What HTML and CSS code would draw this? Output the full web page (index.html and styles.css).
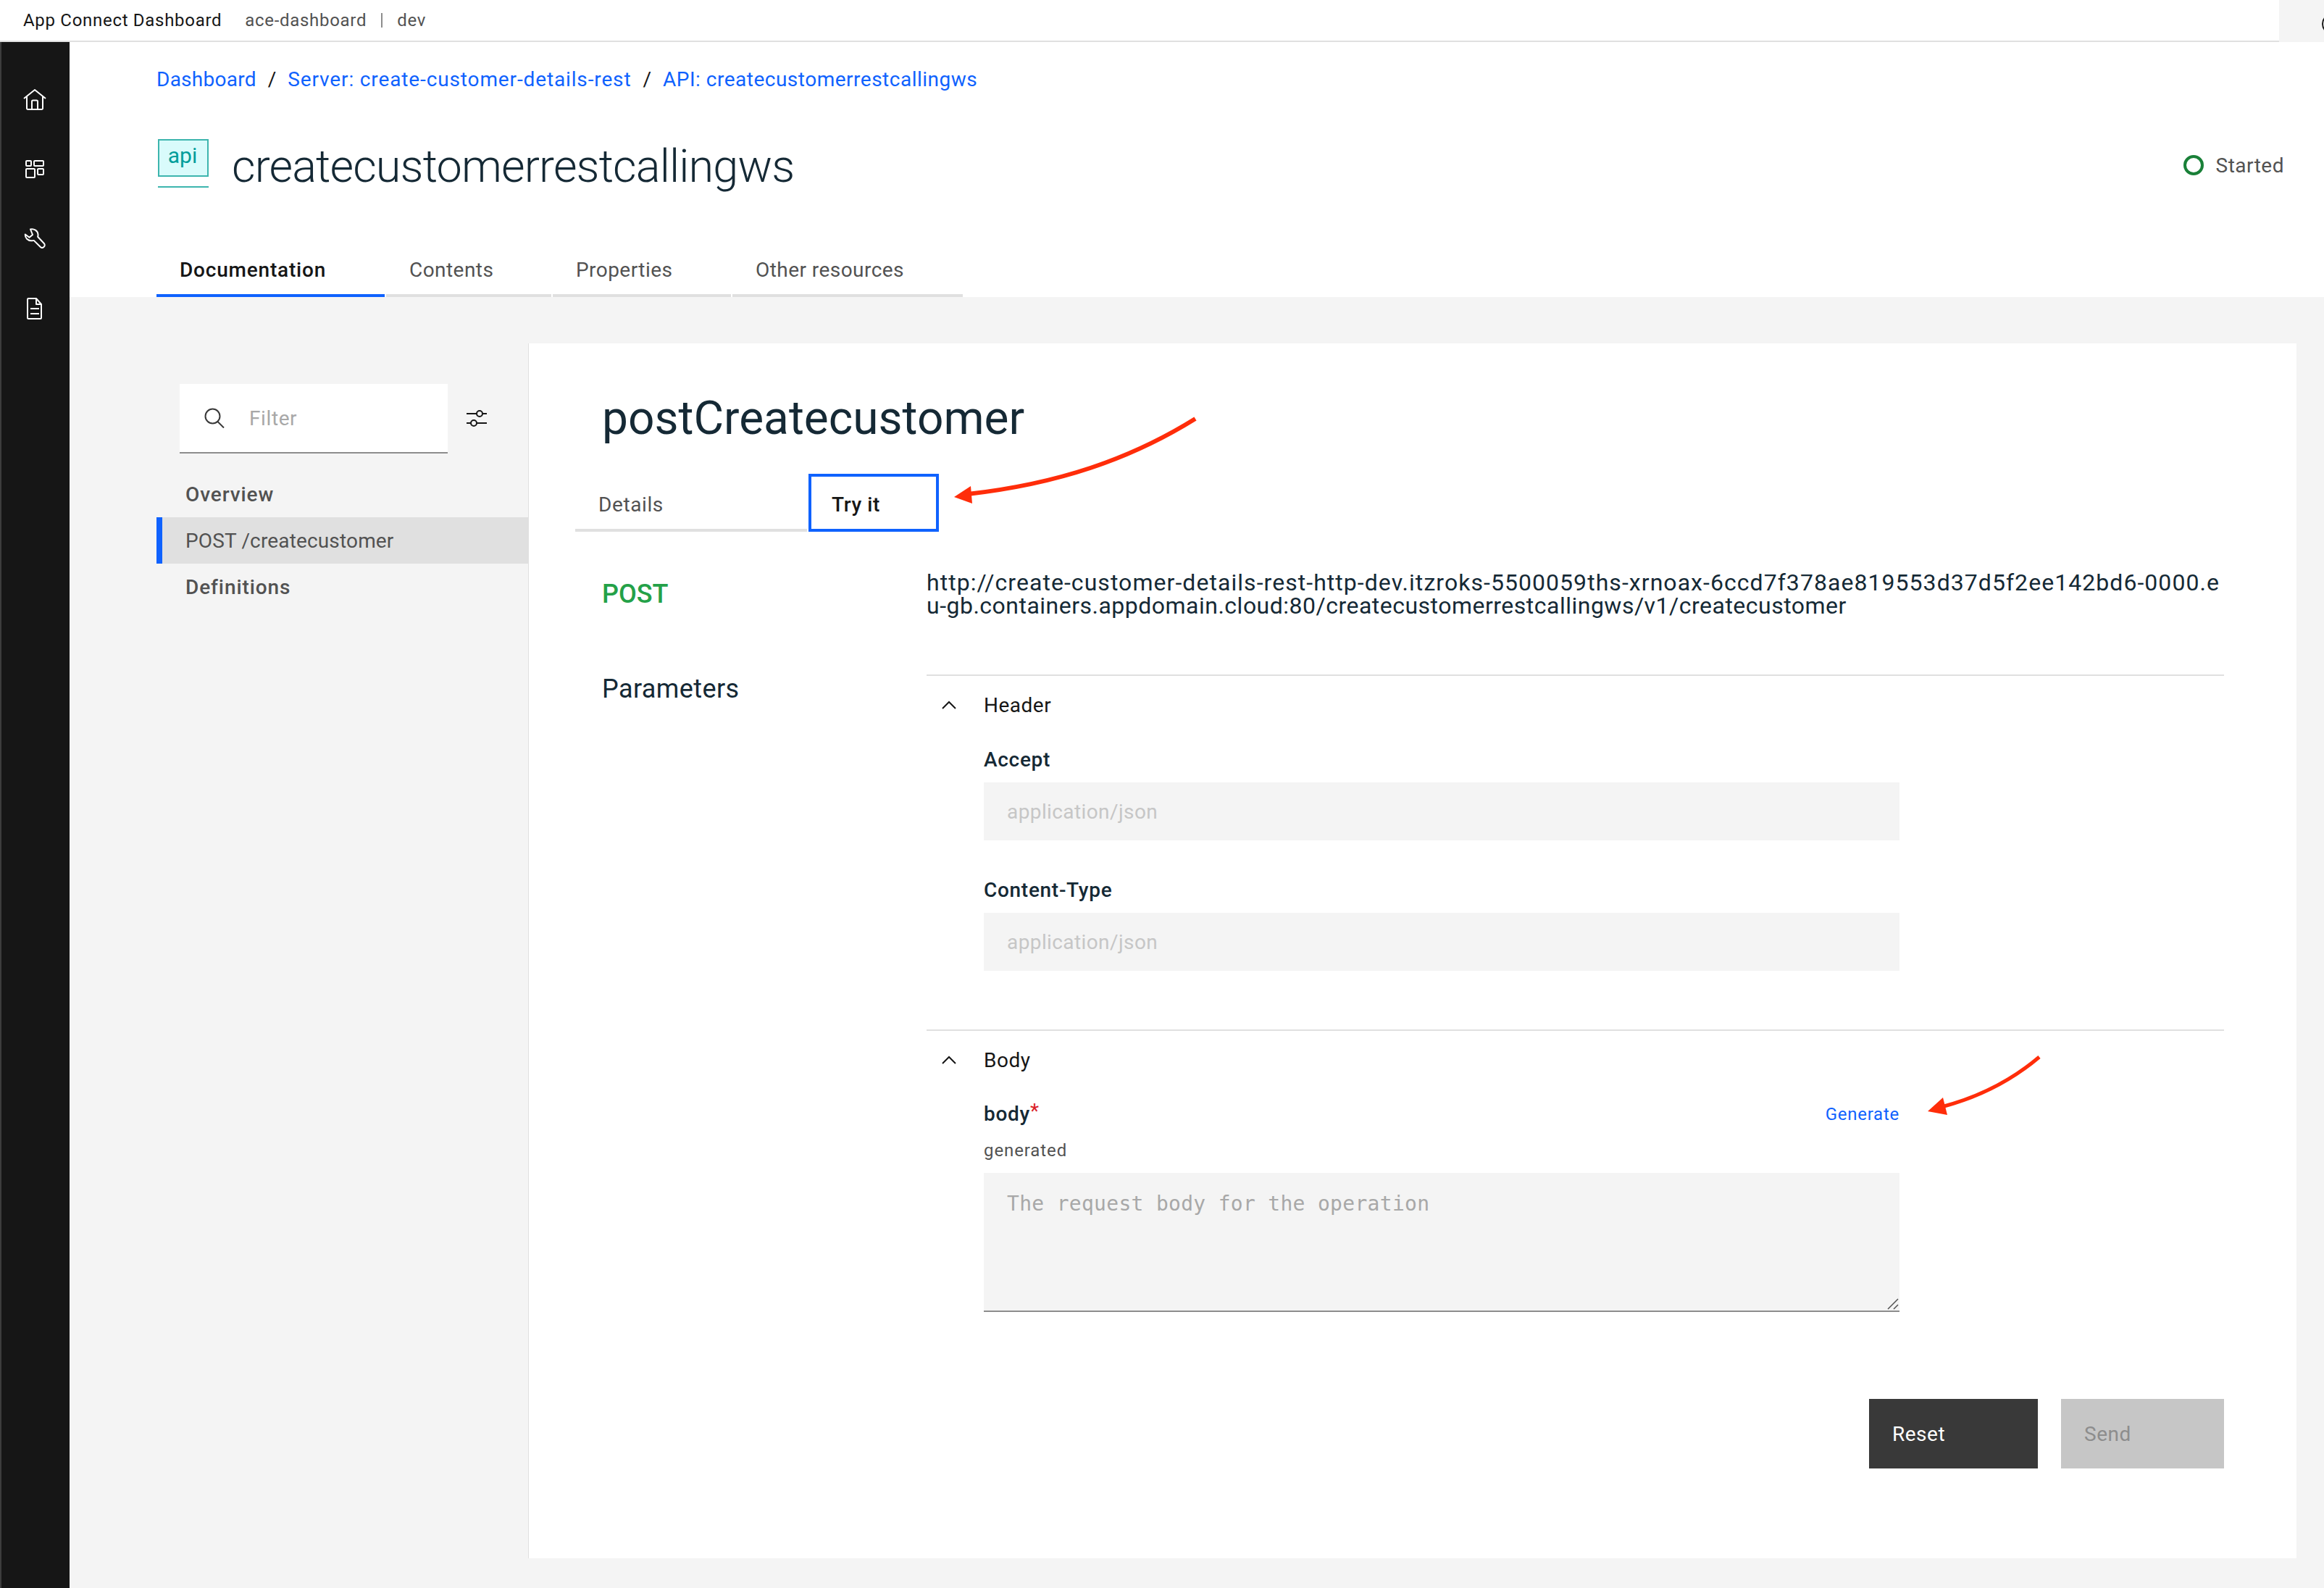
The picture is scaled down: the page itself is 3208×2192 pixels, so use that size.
FILE: index.html
```html
<!DOCTYPE html>
<html lang="en">
<head>
    <meta charset="UTF-8">
    <title>App Connect Dashboard</title>
    <link rel="stylesheet" href="styles.css">
</head>
<body>

<header class="topbar">
    <span class="product">App Connect Dashboard</span>
    <span class="instance">ace-dashboard</span>
    <span class="instance-sep"></span>
    <span class="instance">dev</span>
    <div class="topbar-user">
        <svg width="32" height="32" viewBox="0 0 32 32"><circle cx="16" cy="16" r="13" fill="none" stroke="#161616" stroke-width="2"/></svg>
    </div>
</header>

<div class="layout">
    <nav class="sidebar">
        <div class="side-item">
            <svg width="32" height="30" viewBox="0 0 32 30" fill="none" stroke="#fff" stroke-width="2" stroke-linejoin="round">
                <path d="M1 13 16 1l15 12"/>
                <path d="M5 10v16.500a1.500 1.500 0 0 0 1.500 1.500h19a1.500 1.500 0 0 0 1.500-1.500V10"/>
                <path d="M12 28V17a1.500 1.500 0 0 1 1.500-1.500h5A1.500 1.500 0 0 1 20 17v11"/>
            </svg>
        </div>
        <div class="side-item">
            <svg width="28" height="26" viewBox="0 0 28 26" fill="none" stroke="#fff" stroke-width="2">
                <rect x="2" y="1" width="7" height="7" rx="1"/>
                <rect x="13" y="1" width="13" height="7" rx="1"/>
                <rect x="2" y="12" width="12" height="12" rx="1"/>
                <rect x="18" y="12" width="8" height="8" rx="1"/>
            </svg>
        </div>
        <div class="side-item">
            <svg width="30" height="30" viewBox="0 0 30 30" fill="none" stroke="#fff" stroke-width="2" stroke-linejoin="round">
                <path d="M9 1.500c5-1.200 10 2 10.500 7 .1 1.200 0 2.300-.4 3.300l8.700 9.200c1.300 1.400 1.200 3.500-.2 4.800s-3.300 1.500-4.700.2l-9.200-9.100c-1.200.4-2.400.5-3.600.3C5.300 17.300 1.500 13.500 1.800 8.500l5.700 4.300 4.500-3.800z"/>
            </svg>
        </div>
        <div class="side-item">
            <svg width="22" height="30" viewBox="0 0 22 30" fill="none" stroke="#fff" stroke-width="2" stroke-linejoin="round">
                <path d="M2 1h11l7 8v18.500a1.500 1.500 0 0 1-1.500 1.500h-16A1.500 1.500 0 0 1 1 27.500V2.500A1.500 1.500 0 0 1 2 1z"/>
                <path d="M13 1v8h7M5 15h12M5 22h12"/>
            </svg>
        </div>
    </nav>

    <main class="main">
        <section class="page-header">
            <div class="breadcrumb">
                <a class="crumb-home">Dashboard</a><span class="crumb-sep">/</span><a class="crumb-server">Server: create-customer-details-rest</a><span class="crumb-sep">/</span><a class="crumb-api">API: createcustomerrestcallingws</a>
            </div>
            <div class="title-row">
                <div class="api-badge">
                    <div class="api-box">api</div>
                    <div class="api-line"></div>
                </div>
                <h1 class="page-title">createcustomerrestcallingws</h1>
                <div class="status">
                    <span class="status-dot"></span>
                    <span>Started</span>
                </div>
            </div>
            <div class="page-tabs">
                <div class="page-tab active">Documentation</div>
                <div class="page-tab">Contents</div>
                <div class="page-tab">Properties</div>
                <div class="page-tab">Other resources</div>
            </div>
        </section>

        <section class="content">
            <aside class="doc-nav">
                <div class="filter-row">
                    <div class="filter">
                        <svg width="28" height="28" viewBox="0 0 28 28" fill="none" stroke="#393939" stroke-width="2"><circle cx="11.500" cy="11.500" r="10"/><path d="M18.500 19 27 27.500"/></svg>
                        <input class="filter-input" type="text" placeholder="Filter">
                    </div>
                    <svg class="filter-opts" width="28" height="24" viewBox="0 0 28 24" fill="none" stroke="#161616" stroke-width="2"><path d="M0 5h14M22 5h6M0 18h6M14 18h14"/><circle cx="18" cy="5" r="4"/><circle cx="10" cy="18" r="4"/></svg>
                </div>
                <div class="nav-item strong">Overview</div>
                <div class="nav-item selected">POST /createcustomer</div>
                <div class="nav-item strong">Definitions</div>
            </aside>

            <article class="card">
                <h2 class="op-title">postCreatecustomer</h2>
                <div class="op-tabs">
                    <div class="op-tab">Details</div>
                    <div class="op-tab current">Try it</div>
                </div>
                <div class="op-grid">
                    <div class="method">POST</div>
                    <div class="url">
                        <span class="url-host">http://create-customer-details-rest-http-dev.itzroks-5500059ths-xrnoax-6ccd7f378ae819553d37d5f2ee142bd6-0000.e</span>
                        <span class="url-path">u-gb.containers.appdomain.cloud:80/createcustomerrestcallingws/v1/createcustomer</span>
                    </div>
                    <div class="params-title">Parameters</div>
                    <div class="params">
                        <div class="accordion">
                            <div class="acc-head">
                                <svg width="20" height="12" viewBox="0 0 20 12" fill="none" stroke="#161616" stroke-width="2"><path d="M1 11 10 2l9 9"/></svg>
                                <span>Header</span>
                            </div>
                            <div class="acc-body">
                                <label class="field-label">Accept</label>
                                <input class="field-input" type="text" placeholder="application/json">
                                <label class="field-label next">Content-Type</label>
                                <input class="field-input" type="text" placeholder="application/json">
                            </div>
                        </div>
                        <div class="accordion">
                            <div class="acc-head">
                                <svg width="20" height="12" viewBox="0 0 20 12" fill="none" stroke="#161616" stroke-width="2"><path d="M1 11 10 2l9 9"/></svg>
                                <span>Body</span>
                            </div>
                            <div class="acc-body tight">
                                <div class="body-label">
                                    <label class="field-label">body<span class="req">*</span></label>
                                    <a class="generate">Generate</a>
                                </div>
                                <div class="field-hint">generated</div>
                                <div class="area-wrap">
                                    <textarea class="field-area" placeholder="The request body for the operation"></textarea>
                                    <svg class="area-grip" width="16" height="16" viewBox="0 0 16 16" fill="none" stroke="#525252" stroke-width="1.500"><path d="M1 15 15 1M9 15l6-6"/></svg>
                                </div>
                            </div>
                        </div>
                        <div class="actions">
                            <button class="btn btn-reset">Reset</button>
                            <button class="btn btn-send" disabled>Send</button>
                        </div>
                    </div>
                </div>
            </article>
        </section>
    </main>
</div>

<svg class="annotations" width="3208" height="2192" viewBox="0 0 3208 2192" fill="none">
    <path d="M1650 578C1560 634 1460 668 1336 682" stroke="#ff2d0a" stroke-width="6"/>
    <path d="M1317 686 1340 671 1342 695z" fill="#ff2d0a"/>
    <path d="M2815 1459C2775 1493 2730 1515 2680 1528" stroke="#ff2d0a" stroke-width="5"/>
    <path d="M2661 1534 2682 1515 2688 1539z" fill="#ff2d0a"/>
</svg>

</body>
</html>
```

FILE: styles.css
```css
body {
    font-family: 'Roboto', sans-serif;
    margin: 0;
    width: 3208px;
    height: 2192px;
    overflow: hidden;
    background-color: #f4f4f4;
    color: #161616;
    display: flex;
    flex-direction: column;
    position: relative;
}

/* top bar */
.topbar {
    height: 56px;
    flex: none;
    display: flex;
    align-items: center;
    padding-left: 32px;
    background-color: #fff;
    border-bottom: 2px solid #e0e0e0;
    font-size: 24px;
    letter-spacing: 0.7px;
    position: relative;
}

.product {
    margin-right: 32px;
}

.instance {
    color: #525252;
}

.instance-sep {
    width: 2px;
    height: 20px;
    margin: 0 20px;
    background-color: #8d8d8d;
}

.topbar-user {
    margin-left: auto;
    width: 62px;
    height: 58px;
    margin-bottom: -2px;
    background-color: #f4f4f4;
    overflow: hidden;
    padding: 17px 0 0 57px;
    box-sizing: border-box;
}

.layout {
    flex: 1;
    display: flex;
    min-height: 0;
}

/* sidebar */
.sidebar {
    width: 94px;
    flex: none;
    background-color: #161616;
    border-left: 2px solid #3d3d3d;
    padding-top: 32px;
}

.side-item {
    height: 96px;
    display: flex;
    align-items: center;
    justify-content: center;
    margin-left: -2px;
}

.main {
    flex: 1;
    display: flex;
    flex-direction: column;
    min-width: 0;
}

/* page header */
.page-header {
    background-color: #fff;
    padding: 36px 55px 0 120px;
    height: 316px;
}

.breadcrumb {
    font-size: 28px;
    line-height: 32px;
    display: flex;
}

.breadcrumb a {
    color: #0f62fe;
}

.crumb-home {
    letter-spacing: 0.25px;
}

.crumb-server {
    letter-spacing: 0.87px;
}

.crumb-api {
    letter-spacing: 0.5px;
}

.crumb-sep {
    margin: 0 16px;
}

.title-row {
    display: flex;
    align-items: flex-start;
    margin-top: 66px;
    height: 68px;
}

.api-badge {
    width: 70px;
    margin-left: 2px;
}

.api-box {
    height: 52px;
    box-sizing: border-box;
    background-color: #d9fbfb;
    border: 2px solid #3db5ae;
    color: #009d9a;
    font-size: 30px;
    line-height: 42px;
    text-align: center;
    padding-right: 2px;
}

.api-line {
    height: 2px;
    margin-top: 13px;
    background-color: #3db5ae;
}

.page-title {
    margin: 0 0 0 32px;
    font-size: 63px;
    line-height: 76px;
    font-weight: 300;
    letter-spacing: -0.85px;
    color: #152935;
}

.status {
    margin-left: auto;
    display: flex;
    align-items: center;
    gap: 17px;
    font-size: 28px;
    letter-spacing: 0.5px;
    color: #525252;
    height: 72px;
}

.status-dot {
    width: 28px;
    height: 28px;
    box-sizing: border-box;
    border: 4px solid #198038;
    border-radius: 50%;
}

.page-tabs {
    display: grid;
    grid-template-columns: 315px 228px 246px 318px;
    gap: 2px;
    margin-top: 80px;
}

.page-tab {
    height: 70px;
    box-sizing: border-box;
    padding: 16px 0 0 32px;
    line-height: 34px;
    font-size: 28px;
    letter-spacing: 0.45px;
    color: #525252;
    border-bottom: 4px solid #e0e0e0;
}

.page-tab.active {
    color: #161616;
    font-weight: 500;
    letter-spacing: 0.8px;
    border-bottom-color: #0f62fe;
}

/* content */
.content {
    flex: 1;
    display: flex;
    min-height: 0;
    padding: 64px 38px 41px 120px;
}

.doc-nav {
    width: 513px;
    flex: none;
    padding-top: 56px;
}

.filter-row {
    display: flex;
    align-items: center;
    margin: 0 0 24px 32px;
}

.filter {
    width: 370px;
    height: 96px;
    box-sizing: border-box;
    background-color: #fff;
    border-bottom: 2px solid #8d8d8d;
    display: flex;
    align-items: center;
    padding-left: 34px;
    gap: 34px;
}

.filter-input {
    border: none;
    outline: none;
    background: none;
    font-family: inherit;
    font-size: 28px;
    letter-spacing: 0.6px;
    width: 200px;
    padding: 0;
}

.filter-input::placeholder {
    color: #a8a8a8;
}

.filter-opts {
    margin-left: 26px;
}

.nav-item {
    height: 64px;
    line-height: 66px;
    padding-left: 40px;
    font-size: 28px;
    letter-spacing: 0.15px;
    color: #525252;
}

.nav-item.strong {
    font-weight: 500;
    letter-spacing: 0.9px;
}

.nav-item.selected {
    background-color: #e0e0e0;
    border-left: 8px solid #0f62fe;
    padding-left: 32px;
}

.card {
    flex: 1;
    background-color: #fff;
    border-left: 1px solid #e0e0e0;
    padding: 64px 100px 0 64px;
    min-width: 0;
}

.op-title {
    margin: 0 0 0 37px;
    font-size: 64px;
    line-height: 80px;
    font-weight: 400;
    color: #152935;
}

.op-tabs {
    display: flex;
    gap: 2px;
    margin-top: 36px;
    height: 80px;
}

.op-tab {
    width: 320px;
    box-sizing: border-box;
    padding: 26px 0 0 32px;
    line-height: 34px;
    font-size: 28px;
    letter-spacing: 0.6px;
    color: #525252;
    border-bottom: 4px solid #e0e0e0;
}

.op-tab.current {
    width: 180px;
    border: 4px solid #0f62fe;
    padding: 22px 0 0 28px;
    color: #161616;
    font-weight: 500;
}

.op-grid {
    display: grid;
    grid-template-columns: 448px 1fr;
    row-gap: 79px;
    padding: 54px 0 0 37px;
}

.method {
    margin-top: 14px;
    font-size: 36px;
    line-height: 36px;
    font-weight: 500;
    color: #24a148;
}

.url {
    font-size: 32px;
    line-height: 32px;
    color: #152935;
    white-space: nowrap;
}

.url-host {
    display: block;
    letter-spacing: 1.05px;
}

.url-path {
    display: block;
    letter-spacing: 0.49px;
}

.params-title {
    font-size: 36px;
    line-height: 36px;
    letter-spacing: 0.4px;
    padding-top: 2px;
    color: #152935;
}

.accordion {
    border-top: 2px solid #e0e0e0;
    padding-bottom: 81px;
}

.acc-head {
    height: 80px;
    display: flex;
    align-items: center;
    gap: 38px;
    padding-left: 21px;
    font-size: 28px;
    letter-spacing: 0.5px;
}

.acc-body {
    padding: 20px 0 0 79px;
    width: 1264px;
}

.acc-body.tight {
    padding-top: 19px;
}

.field-label {
    display: block;
    font-size: 28px;
    line-height: 32px;
    font-weight: 500;
    letter-spacing: 0.7px;
    color: #152935;
}

.field-label.next {
    margin-top: 53px;
}

.field-input {
    display: block;
    width: 100%;
    height: 80px;
    margin-top: 15px;
    padding: 1px 32px 0;
    box-sizing: border-box;
    border: none;
    outline: none;
    background-color: #f4f4f4;
    font-family: inherit;
    font-size: 28px;
    letter-spacing: 0.4px;
}

.field-input::placeholder {
    color: #c6c6c6;
}

.body-label {
    display: flex;
    justify-content: space-between;
    align-items: center;
}

.req {
    color: #da1e28;
    font-weight: 400;
    position: relative;
    top: -4px;
}

.generate {
    color: #0f62fe;
    font-size: 24px;
    letter-spacing: 0.75px;
}

.field-hint {
    margin-top: 20px;
    font-size: 24px;
    line-height: 28px;
    letter-spacing: 0.9px;
    color: #525252;
}

.area-wrap {
    position: relative;
    margin-top: 17px;
}

.field-area {
    display: block;
    width: 100%;
    height: 192px;
    padding: 26px 32px;
    box-sizing: border-box;
    border: none;
    border-bottom: 2px solid #8d8d8d;
    outline: none;
    resize: none;
    background-color: #f4f4f4;
    font-family: 'DejaVu Sans Mono', monospace;
    font-size: 28px;
    line-height: 34px;
    letter-spacing: 0.3px;
}

.field-area::placeholder {
    color: #a8a8a8;
}

.area-grip {
    position: absolute;
    right: 1px;
    bottom: 3px;
}

.actions {
    display: flex;
    justify-content: flex-end;
    gap: 32px;
    margin-top: 39px;
}

.btn {
    height: 96px;
    border: none;
    padding: 0 0 0 32px;
    text-align: left;
    font-family: inherit;
    font-size: 28px;
    letter-spacing: 0.5px;
}

.btn-reset {
    width: 233px;
    background-color: #393939;
    color: #fff;
}

.btn-send {
    width: 225px;
    background-color: #c6c6c6;
    color: #8d8d8d;
}

/* arrows drawn on the screenshot */
.annotations {
    position: absolute;
    top: 0;
    left: 0;
    pointer-events: none;
}
```
